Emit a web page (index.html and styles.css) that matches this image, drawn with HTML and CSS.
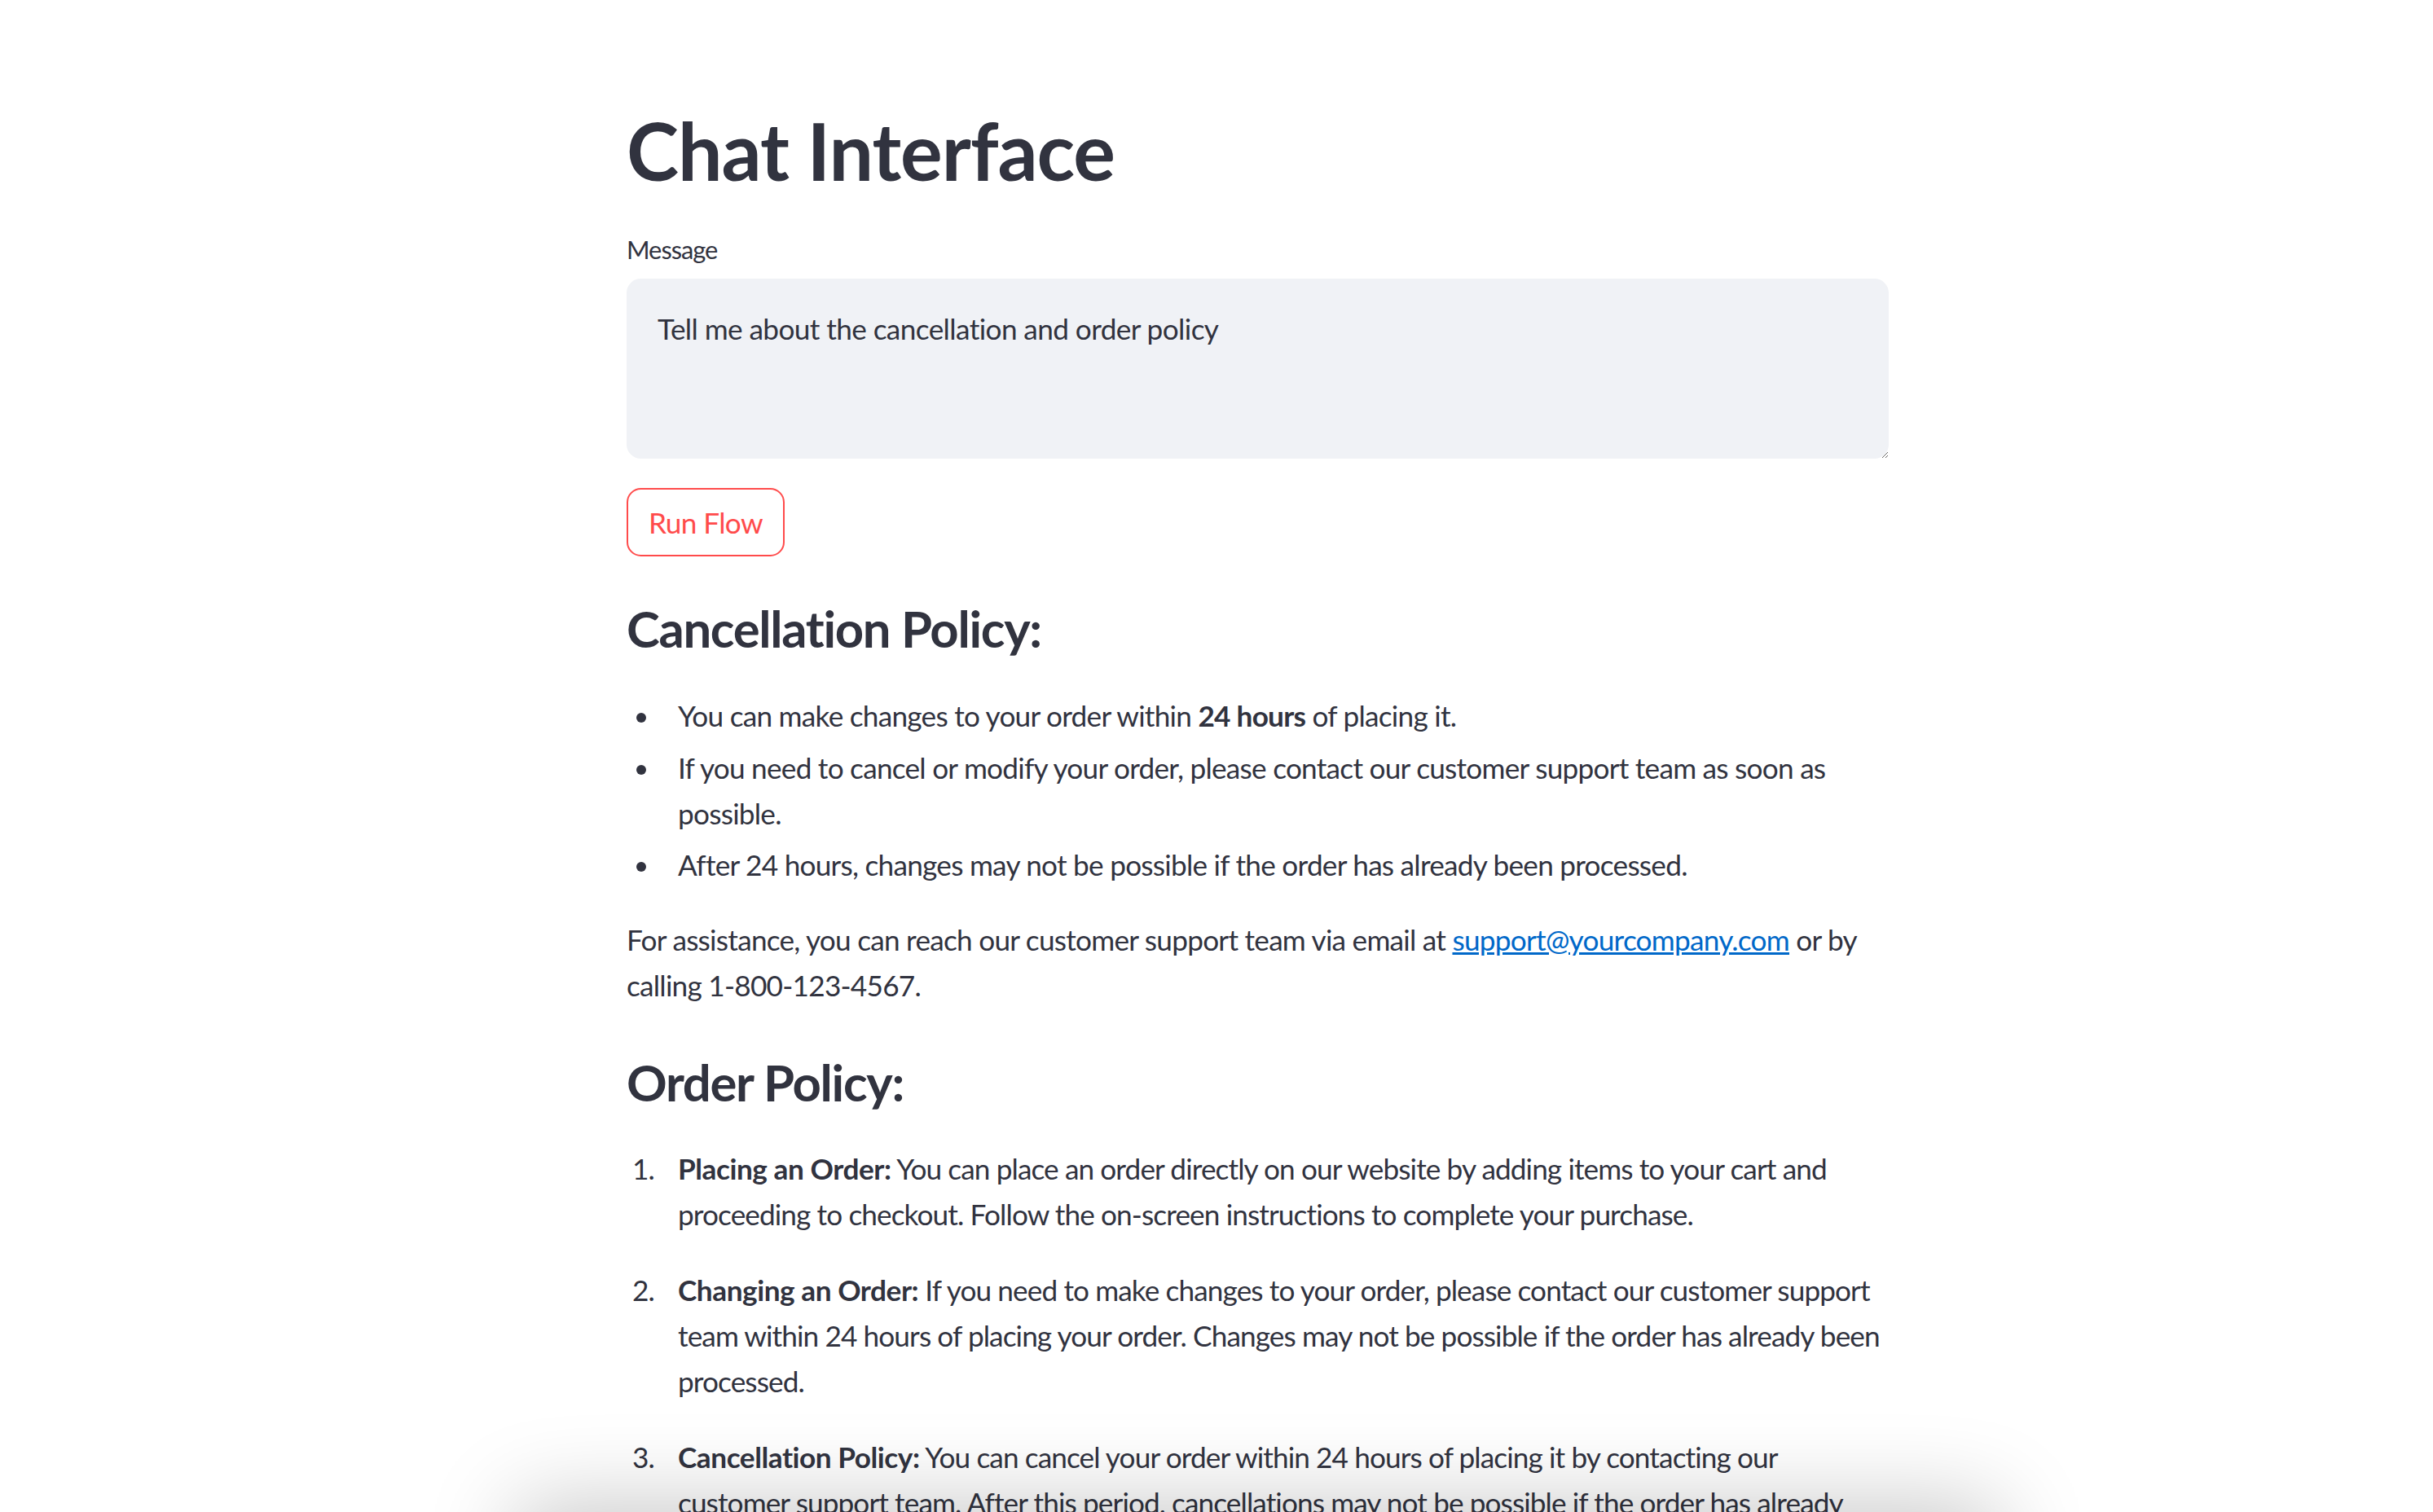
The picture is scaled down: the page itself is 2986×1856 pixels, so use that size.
FILE: index.html
```html
<!DOCTYPE html>
<html lang="en">
<head>
<meta charset="utf-8">
<title>Chat Interface</title>
<link rel="stylesheet" href="styles.css">
</head>
<body>
<main class="main">
  <h1 class="title">Chat Interface</h1>
  <label class="field-label" for="msg">Message</label>
  <textarea id="msg" class="message-box">Tell me about the cancellation and order policy</textarea>
  <button class="run-btn" type="button">Run Flow</button>

  <section class="answer">
    <h3 class="section-heading">Cancellation Policy:</h3>
    <ul class="bullets">
      <li>You can make changes to your order within <strong>24 hours</strong> of placing it.</li>
      <li>If you need to cancel or modify your order, please contact our customer support team as soon as possible.</li>
      <li>After 24 hours, changes may not be possible if the order has already been processed.</li>
    </ul>
    <p class="para">For assistance, you can reach our customer support team via email at <a class="link" href="#">support@yourcompany.com</a> or by calling 1-800-123-4567.</p>

    <h3 class="section-heading">Order Policy:</h3>
    <ol class="numbers">
      <li><p><strong>Placing an Order:</strong> You can place an order directly on our website by adding items to your cart and proceeding to checkout. Follow the on-screen instructions to complete your purchase.</p></li>
      <li><p><strong>Changing an Order:</strong> If you need to make changes to your order, please contact our customer support team within 24 hours of placing your order. Changes may not be possible if the order has already been processed.</p></li>
      <li><p><strong>Cancellation Policy:</strong> You can cancel your order within 24 hours of placing it by contacting our customer support team. After this period, cancellations may not be possible if the order has already been shipped.</p></li>
    </ol>
  </section>
</main>
<div class="bottom-dock"></div>
</body>
</html>
```

FILE: styles.css
```css
html, body {
  margin: 0;
  padding: 0;
  background: #ffffff;
}

body {
  font-family: "Lato", "Liberation Sans", sans-serif;
  color: #31333f;
  font-size: 35.2px;
  line-height: 1.6;
  letter-spacing: -0.75px;
  overflow: hidden;
}

.main {
  width: 1549px;
  margin-left: 769px;
  padding-top: 127px;
  display: flex;
  flex-direction: column;
  align-items: flex-start;
}

.title {
  margin: 0;
  font-size: 96.8px;
  font-weight: 700;
  line-height: 1.2;
  letter-spacing: -1px;
}

.field-label {
  margin-top: 39px;
  font-size: 30.8px;
  line-height: 1.6;
  letter-spacing: -1px;
}

.message-box {
  box-sizing: border-box;
  margin-top: 11px;
  width: 1549px;
  height: 221px;
  padding: 33px 38px 22px;
  border: 0;
  border-radius: 17.6px;
  background: #f0f2f6;
  color: #31333f;
  font-family: "Lato", "Liberation Sans", sans-serif;
  font-size: 35.2px;
  line-height: 1.6;
  letter-spacing: -0.6px;
  outline: none;
}

.run-btn {
  box-sizing: border-box;
  margin-top: 36px;
  height: 84px;
  padding: 0 25px;
  border: 2px solid #ff4b4b;
  border-radius: 17.6px;
  background: #ffffff;
  color: #ff4b4b;
  font-family: "Lato", "Liberation Sans", sans-serif;
  font-size: 35.2px;
  line-height: 1.6;
  letter-spacing: -0.6px;
}

.answer {
  width: 100%;
  margin-top: 52px;
}

.section-heading {
  margin: 0;
  font-size: 61.6px;
  font-weight: 700;
  line-height: 1.2;
  letter-spacing: -1.3px;
}

.bullets,
.numbers {
  margin: 41px 0 35px;
  padding: 0;
}

.numbers {
  margin-top: 40px;
  letter-spacing: -0.9px;
}

.numbers strong {
  letter-spacing: -0.45px;
}

.bullets li,
.numbers li {
  margin: 7px 0 7px 42px;
  padding-left: 21px;
}

.bullets li:first-child,
.numbers li:first-child {
  margin-top: 0;
}

.numbers li p {
  margin: 0 0 36px;
}

.para {
  margin: 0 0 55px;
}

.link {
  color: #0068c9;
  text-decoration: underline;
}

.bottom-dock {
  position: fixed;
  left: 50%;
  bottom: -260px;
  width: 1800px;
  height: 260px;
  margin-left: -850px;
  box-shadow: 0 0 110px 10px rgba(0, 0, 0, 0.22);
  background: #ffffff;
  pointer-events: none;
}
```
